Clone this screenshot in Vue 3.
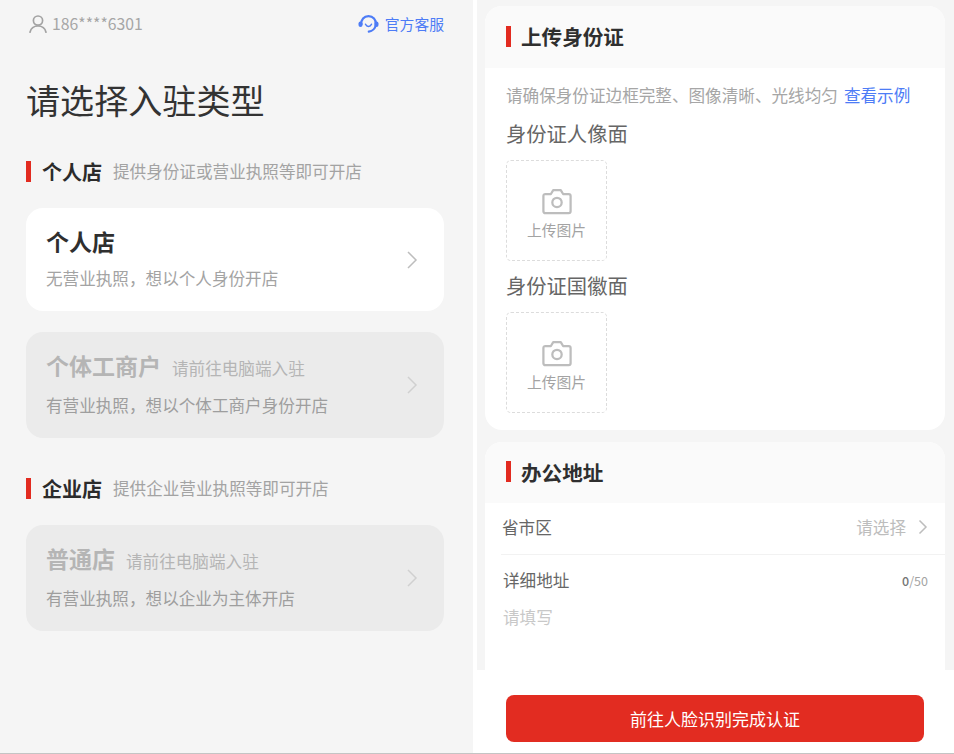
<script setup>
const idSides = ['身份证人像面', '身份证国徽面']
</script>

<template>
  <div class="page">
    <section class="left">
      <header class="top">
        <div class="account">
          <svg class="user-icon" width="20" height="20" viewBox="0 0 20 20" fill="none" stroke="#a3a3a3" stroke-width="1.7" stroke-linecap="round">
            <circle cx="10" cy="6.6" r="4.6" />
            <path d="M2 18.2c.9-3.9 4-6.2 8-6.2s7.100 2.300 8 6.200" />
          </svg>
          <span>186****6301</span>
        </div>
        <div class="service">
          <svg width="21" height="20" viewBox="0 0 21 20" fill="none">
            <path d="M3.400 10.500C2.800 5.800 6 2.200 10.500 2.200s7.800 3.500 7.300 8.100c-.4 4-3.300 6.900-7 7.300" stroke="#4d7cf6" stroke-width="2.200" stroke-linecap="round" />
            <rect x="0.500" y="7.500" width="4" height="5.500" rx="2" fill="#4d7cf6" />
            <rect x="16.500" y="7.500" width="4" height="5.500" rx="2" fill="#4d7cf6" />
            <path d="M7.500 10.200c.7 1.500 1.800 2.200 3 2.200s2.300-.7 3-2.200" stroke="#4d7cf6" stroke-width="1.500" stroke-linecap="round" />
          </svg>
          <span>官方客服</span>
        </div>
      </header>

      <h1>请选择入驻类型</h1>

      <div class="section-head">
        <i class="bar"></i><strong>个人店</strong><span>提供身份证或营业执照等即可开店</span>
      </div>
      <div class="shop-card">
        <div class="shop-text">
          <div class="shop-title"><strong>个人店</strong></div>
          <p>无营业执照，想以个人身份开店</p>
        </div>
        <svg class="chev" width="12" height="20" viewBox="0 0 12 20" fill="none" stroke="#bdbdbd" stroke-width="1.500"><path d="M2 2l8 8-8 8" /></svg>
      </div>
      <div class="shop-card off">
        <div class="shop-text">
          <div class="shop-title"><strong>个体工商户</strong><span>请前往电脑端入驻</span></div>
          <p>有营业执照，想以个体工商户身份开店</p>
        </div>
        <svg class="chev" width="12" height="20" viewBox="0 0 12 20" fill="none" stroke="#d0d0d0" stroke-width="1.500"><path d="M2 2l8 8-8 8" /></svg>
      </div>

      <div class="section-head second">
        <i class="bar"></i><strong>企业店</strong><span>提供企业营业执照等即可开店</span>
      </div>
      <div class="shop-card off">
        <div class="shop-text">
          <div class="shop-title"><strong>普通店</strong><span>请前往电脑端入驻</span></div>
          <p>有营业执照，想以企业为主体开店</p>
        </div>
        <svg class="chev" width="12" height="20" viewBox="0 0 12 20" fill="none" stroke="#d0d0d0" stroke-width="1.500"><path d="M2 2l8 8-8 8" /></svg>
      </div>
    </section>

    <section class="right">
      <div class="scroll">
        <div class="panel first">
          <div class="panel-head"><i class="bar"></i><strong>上传身份证</strong></div>
          <div class="panel-body">
            <p class="hint">请确保身份证边框完整、图像清晰、光线均匀<a>查看示例</a></p>
            <template v-for="side in idSides" :key="side">
              <div class="side-label">{{ side }}</div>
              <div class="upload">
                <svg width="30" height="27" viewBox="0 0 32 28" fill="none" stroke="#bdbdbd" stroke-width="2.400" stroke-linejoin="round">
                  <path d="M3.500 6h6L12 1.800h8L22.500 6h6c1.100 0 2 .9 2 2v16.500c0 1.100-.9 2-2 2h-25c-1.100 0-2-.9-2-2V8c0-1.100.9-2 2-2z" />
                  <circle cx="16" cy="15" r="5" />
                </svg>
                <span>上传图片</span>
              </div>
            </template>
          </div>
        </div>

        <div class="panel">
          <div class="panel-head second"><i class="bar"></i><strong>办公地址</strong></div>
          <div class="address">
            <div class="row region">
              <span class="label">省市区</span>
              <span class="choose">请选择
                <svg width="10" height="16" viewBox="0 0 10 16" fill="none" stroke="#bdbdbd" stroke-width="1.500"><path d="M1.500 1.500L8 8l-6.500 6.500" /></svg>
              </span>
            </div>
            <div class="row detail">
              <span class="label">详细地址</span>
              <span class="count"><b>0</b>/50</span>
            </div>
            <div class="placeholder">请填写</div>
          </div>
        </div>
      </div>
      <footer class="action">
        <button type="button">前往人脸识别完成认证</button>
      </footer>
    </section>
  </div>
</template>

<style>
html, body { margin: 0; background: #fff; overflow: hidden; }
</style>

<style scoped>
.page {
  width: 954px;
  height: 754px;
  display: grid;
  grid-template-columns: 473px 477px;
  column-gap: 4px;
  border-bottom: 1px solid #c4c4c4;
  box-sizing: border-box;
  font-family: "Noto Sans CJK SC", "Noto Sans", sans-serif;
  overflow: hidden;
}
.left {
  background: #f5f5f5;
  padding: 0 29px 0 26px;
}
.top {
  height: 47px;
  display: flex;
  align-items: center;
  justify-content: space-between;
}
.account {
  display: flex;
  align-items: center;
  gap: 4px;
  color: #a6a6a6;
  padding-left: 2px;
  font-size: 15.800px;
}
.service {
  display: flex;
  align-items: center;
  gap: 6px;
  color: #4d7cf6;
  font-size: 14.800px;
}
h1 {
  margin: 28px 0 0;
  font-size: 34.100px;
  line-height: 48px;
  font-weight: 400;
  color: #333;
}
.section-head {
  margin-top: 31px;
  height: 34px;
  display: flex;
  align-items: center;
}
.section-head.second { margin-top: 33px; }
.bar {
  width: 5px;
  height: 21px;
  background: #e22b20;
  flex: none;
}
.section-head strong {
  margin-left: 11px;
  font-size: 20px;
  font-weight: 700;
  color: #2b2b2b;
}
.section-head span {
  margin-left: 11px;
  font-size: 16.600px;
  color: #a3a3a3;
}
.shop-card {
  margin-top: 20px;
  height: 103px;
  box-sizing: border-box;
  padding: 0 26px 0 20px;
  border-radius: 17px;
  background: #fff;
  display: flex;
  align-items: center;
  justify-content: space-between;
}
.shop-card > .shop-text { padding-bottom: 4px; }
.shop-card.off {
  margin-top: 21px;
  height: 106px;
  background: #ebebeb;
}
.section-head.second + .shop-card.off { margin-top: 20px; }
.shop-title {
  display: flex;
  align-items: baseline;
  gap: 11px;
  line-height: 34px;
}
.shop-title strong {
  font-size: 23px;
  font-weight: 700;
  color: #2f2f2f;
}
.off .shop-title strong {
  color: #b5b5b5;
}
.shop-title span {
  font-size: 16.600px;
  color: #b5b5b5;
}
.shop-text p {
  margin: 7px 0 0;
  font-size: 16.600px;
  line-height: 26px;
  color: #a3a3a3;
}
.off .shop-text p {
  color: #9e9e9e;
}

.right {
  position: relative;
  background: #f5f5f5;
  overflow: hidden;
  display: flex;
  flex-direction: column;
}
.scroll {
  flex: 1;
  min-height: 0;
  overflow: hidden;
  padding: 6px 9px 0 8px;
}
.panel {
  border-radius: 17px 17px 0 0;
  overflow: hidden;
  background: #fff;
  margin-top: 12px;
}
.panel.first {
  margin-top: 0;
  border-radius: 17px;
}
.panel-head {
  height: 62px;
  box-sizing: border-box;
  padding: 0 0 2px 21px;
  background: #fafafa;
  display: flex;
  align-items: center;
}
.panel-head.second { height: 61px; }
.panel-head strong {
  margin-left: 10px;
  font-size: 20.600px;
  font-weight: 700;
  color: #2f2f2f;
}
.panel-body {
  padding: 14px 21px 17px;
}
.hint {
  margin: 0;
  font-size: 16.600px;
  line-height: 26px;
  color: #a6a6a6;
  white-space: nowrap;
}
.hint a {
  margin-left: 6px;
  color: #4d7cf6;
}
.side-label {
  margin-top: 10px;
  font-size: 20.300px;
  line-height: 30px;
  color: #666;
}
.upload + .side-label { margin-top: 9px; }
.upload {
  margin-top: 12px;
  width: 101px;
  height: 101px;
  box-sizing: border-box;
  padding-top: 7px;
  border: 1px dashed #dcdcdc;
  border-radius: 5px;
  display: flex;
  flex-direction: column;
  align-items: center;
  justify-content: center;
  gap: 4px;
  color: #a3a3a3;
  font-size: 14.800px;
}
.upload span { line-height: 22px; }
.address {
  height: 170px;
  padding-left: 16px;
}
.row {
  display: flex;
  justify-content: space-between;
  align-items: center;
  padding-right: 17px;
}
.region {
  height: 51px;
  box-sizing: content-box;
  border-bottom: 1px solid #f2f2f2;
}
.region .label,
.region .choose { margin-bottom: 3px; }
.detail {
  margin-top: 11px;
  height: 28px;
}
.label {
  margin-left: 1px;
  font-size: 16.600px;
  color: #666;
}
.detail .label { margin-left: 2px; }
.choose {
  display: flex;
  align-items: center;
  gap: 12px;
  font-size: 16.600px;
  color: #bdbdbd;
}
.count {
  font-size: 12.500px;
  color: #a3a3a3;
}
.count b {
  font-weight: 500;
  color: #757575;
}
.placeholder {
  margin: 9px 0 0 2px;
  font-size: 16.600px;
  line-height: 28px;
  color: #c8c8c8;
}
.action {
  flex: none;
  height: 83px;
  background: #fff;
  box-sizing: border-box;
  padding: 25px 30px 0 29px;
}
button {
  width: 100%;
  height: 47px;
  border: 0;
  border-radius: 8px;
  background: #e22c21;
  color: #fff;
  font: inherit;
  font-size: 17px;
  padding: 0;
}
</style>
